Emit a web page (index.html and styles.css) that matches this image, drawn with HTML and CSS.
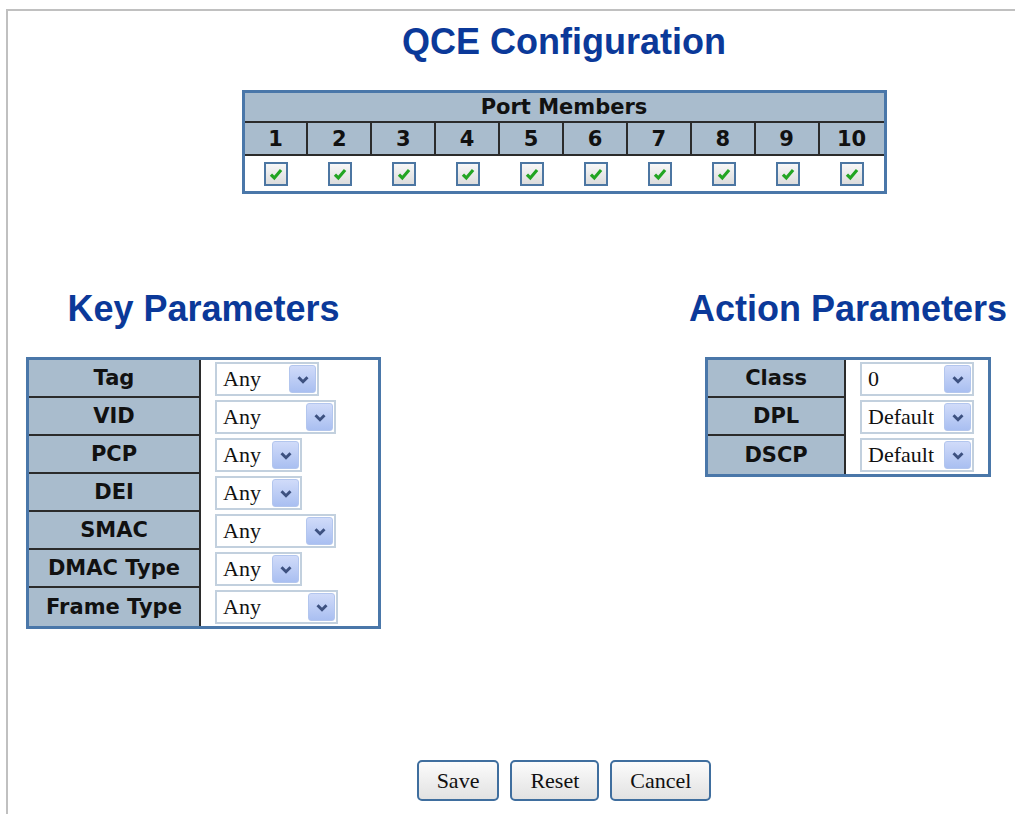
FILE: index.html
```html
<!doctype html>
<html lang="en">
  <head>
    <meta charset="UTF-8" />
    <title>QCE Configuration</title>
    <link rel="stylesheet" href="styles.css">
  </head>
  <body>
    <div class="frame">
      <div class="stage">
        <h1 class="heading">QCE Configuration</h1>

        <div class="box ports">
          <div class="ports-title">Port Members</div>
          <div class="port-no">1</div>
          <div class="port-no">2</div>
          <div class="port-no">3</div>
          <div class="port-no">4</div>
          <div class="port-no">5</div>
          <div class="port-no">6</div>
          <div class="port-no">7</div>
          <div class="port-no">8</div>
          <div class="port-no">9</div>
          <div class="port-no">10</div>
          <div class="port-cell"><span class="check"><svg viewBox="0 0 16 16"><path d="M3.5 8.5 6.5 11.5 12.5 4.5" /></svg></span></div>
          <div class="port-cell"><span class="check"><svg viewBox="0 0 16 16"><path d="M3.5 8.5 6.5 11.5 12.5 4.5" /></svg></span></div>
          <div class="port-cell"><span class="check"><svg viewBox="0 0 16 16"><path d="M3.5 8.5 6.5 11.5 12.5 4.5" /></svg></span></div>
          <div class="port-cell"><span class="check"><svg viewBox="0 0 16 16"><path d="M3.5 8.5 6.5 11.5 12.5 4.5" /></svg></span></div>
          <div class="port-cell"><span class="check"><svg viewBox="0 0 16 16"><path d="M3.5 8.5 6.5 11.5 12.5 4.5" /></svg></span></div>
          <div class="port-cell"><span class="check"><svg viewBox="0 0 16 16"><path d="M3.5 8.5 6.5 11.5 12.5 4.5" /></svg></span></div>
          <div class="port-cell"><span class="check"><svg viewBox="0 0 16 16"><path d="M3.5 8.5 6.5 11.5 12.5 4.5" /></svg></span></div>
          <div class="port-cell"><span class="check"><svg viewBox="0 0 16 16"><path d="M3.5 8.5 6.5 11.5 12.5 4.5" /></svg></span></div>
          <div class="port-cell"><span class="check"><svg viewBox="0 0 16 16"><path d="M3.5 8.5 6.5 11.5 12.5 4.5" /></svg></span></div>
          <div class="port-cell"><span class="check"><svg viewBox="0 0 16 16"><path d="M3.5 8.5 6.5 11.5 12.5 4.5" /></svg></span></div>
        </div>
      </div>

      <div class="params">
        <section class="param-col">
          <h2 class="heading">Key Parameters</h2>
          <div class="box kv kv-key">
            <div class="kv-label">Tag</div>
            <div class="kv-value"><span class="sel sel-m"><span>Any</span><span class="sel-btn"><svg viewBox="0 0 12 8"><path d="M2 2 6 6 10 2" /></svg></span></span></div>
            <div class="kv-label">VID</div>
            <div class="kv-value"><span class="sel sel-l"><span>Any</span><span class="sel-btn"><svg viewBox="0 0 12 8"><path d="M2 2 6 6 10 2" /></svg></span></span></div>
            <div class="kv-label">PCP</div>
            <div class="kv-value"><span class="sel sel-s"><span>Any</span><span class="sel-btn"><svg viewBox="0 0 12 8"><path d="M2 2 6 6 10 2" /></svg></span></span></div>
            <div class="kv-label">DEI</div>
            <div class="kv-value"><span class="sel sel-s"><span>Any</span><span class="sel-btn"><svg viewBox="0 0 12 8"><path d="M2 2 6 6 10 2" /></svg></span></span></div>
            <div class="kv-label">SMAC</div>
            <div class="kv-value"><span class="sel sel-l"><span>Any</span><span class="sel-btn"><svg viewBox="0 0 12 8"><path d="M2 2 6 6 10 2" /></svg></span></span></div>
            <div class="kv-label">DMAC Type</div>
            <div class="kv-value"><span class="sel sel-s"><span>Any</span><span class="sel-btn"><svg viewBox="0 0 12 8"><path d="M2 2 6 6 10 2" /></svg></span></span></div>
            <div class="kv-label">Frame Type</div>
            <div class="kv-value"><span class="sel sel-xl"><span>Any</span><span class="sel-btn"><svg viewBox="0 0 12 8"><path d="M2 2 6 6 10 2" /></svg></span></span></div>
          </div>
        </section>

        <section class="param-col">
          <h2 class="heading">Action Parameters</h2>
          <div class="box kv kv-action">
            <div class="kv-label">Class</div>
            <div class="kv-value"><span class="sel sel-act"><span>0</span><span class="sel-btn"><svg viewBox="0 0 12 8"><path d="M2 2 6 6 10 2" /></svg></span></span></div>
            <div class="kv-label">DPL</div>
            <div class="kv-value"><span class="sel sel-act"><span>Default</span><span class="sel-btn"><svg viewBox="0 0 12 8"><path d="M2 2 6 6 10 2" /></svg></span></span></div>
            <div class="kv-label">DSCP</div>
            <div class="kv-value"><span class="sel sel-act"><span>Default</span><span class="sel-btn"><svg viewBox="0 0 12 8"><path d="M2 2 6 6 10 2" /></svg></span></span></div>
          </div>
        </section>
      </div>

      <div class="stage actions">
        <button class="btn">Save</button>
        <button class="btn">Reset</button>
        <button class="btn">Cancel</button>
      </div>
    </div>
  </body>
</html>
```

FILE: styles.css
```css
:root {
  --line: #2b2b2b;
  --frame: #4a77a9;
  --head-bg: #a9bccd;
}

body {
  margin: 0;
  overflow: hidden;
  background: white;
  font-family: "DejaVu Sans", sans-serif;
}

.frame {
  margin: 9px 0 0 6px;
  height: calc(100vh - 9px);
  box-sizing: border-box;
  border-top: 2px solid #c0c0c0;
  border-left: 2px solid #c0c0c0;
  overflow: hidden;
}

.stage {
  padding-left: 105px;
  display: flex;
  flex-direction: column;
  align-items: center;
}

.heading {
  margin: 0;
  font-family: "Liberation Sans", Arial, sans-serif;
  font-size: 36px;
  line-height: 40px;
  font-weight: bold;
  color: #0b3999;
  white-space: nowrap;
}

h1.heading {
  margin-top: 11px;
  margin-bottom: 28px;
}

h2.heading {
  margin-bottom: 28px;
}

.box {
  border: 3px solid var(--frame);
  background: white;
  font-weight: bold;
  font-size: 21px;
  color: #111;
}

/* port members */
.ports {
  width: 645px;
  box-sizing: border-box;
  display: grid;
  grid-template-columns: repeat(10, 1fr);
}

.ports-title {
  grid-column: 1 / -1;
  height: 30px;
  border-bottom: 2px solid var(--line);
  background: var(--head-bg);
  box-sizing: border-box;
  display: flex;
  align-items: center;
  justify-content: center;
}

.port-no {
  height: 33px;
  box-sizing: border-box;
  border-bottom: 2px solid var(--line);
  border-right: 2px solid var(--line);
  background: var(--head-bg);
  display: flex;
  align-items: center;
  justify-content: center;
}

.port-no:nth-child(11) {
  border-right: none;
}

.port-cell {
  height: 35px;
  display: flex;
  align-items: center;
  justify-content: center;
}

.check {
  width: 24px;
  height: 24px;
  box-sizing: border-box;
  border: 2px solid #4c76a2;
  background: linear-gradient(#f7f7f7, #dcdcdc);
  display: flex;
  align-items: center;
  justify-content: center;
}

.check svg {
  width: 18px;
  height: 18px;
  fill: none;
  stroke: #22a522;
  stroke-width: 2.8;
}

/* key / action parameters */
.params {
  display: flex;
  align-items: flex-start;
  gap: 308px;
  padding-left: 18px;
  margin-top: 95px;
}

.param-col {
  display: flex;
  flex-direction: column;
  align-items: center;
}

.kv {
  display: grid;
}

.kv-key {
  grid-template-columns: 172px 177px;
}

.kv-action {
  grid-template-columns: 138px 142px;
}

.kv-label {
  height: 38px;
  box-sizing: border-box;
  border-right: 2px solid var(--line);
  border-bottom: 2px solid var(--line);
  background: var(--head-bg);
  display: flex;
  align-items: center;
  justify-content: center;
  white-space: nowrap;
}

.kv-label:nth-last-child(2) {
  border-bottom: none;
}

.kv-value {
  height: 38px;
  padding-left: 14px;
  display: flex;
  align-items: center;
}

.sel {
  height: 34px;
  box-sizing: border-box;
  border: 2px solid #c2d0de;
  background: white;
  display: flex;
  align-items: center;
  justify-content: space-between;
  padding: 0 1px 0 6px;
  font-family: "Liberation Serif", "Times New Roman", serif;
  font-weight: normal;
  font-size: 22px;
  color: #111;
}

.sel-s { width: 87px; }
.sel-m { width: 104px; }
.sel-l { width: 121px; }
.sel-xl { width: 123px; }
.sel-act { width: 114px; }

.sel-btn {
  width: 27px;
  height: 28px;
  box-sizing: border-box;
  border: 1px solid #b3c6ee;
  border-radius: 3px;
  background: linear-gradient(#d0dbf9, #a9bff1);
  display: flex;
  align-items: center;
  justify-content: center;
}

.sel-btn svg {
  width: 14px;
  height: 9px;
  fill: none;
  stroke: #3d5180;
  stroke-width: 2.6;
}

/* buttons */
.actions {
  flex-direction: row;
  justify-content: center;
  gap: 11px;
  margin-top: 131px;
}

.btn {
  height: 41px;
  padding: 0 18px;
  border: 2px solid #3f6e9e;
  border-radius: 5px;
  background: linear-gradient(#fbfbfb, #e2e2e2);
  font-family: "Liberation Serif", "Times New Roman", serif;
  font-size: 22px;
  color: #111;
}
```
